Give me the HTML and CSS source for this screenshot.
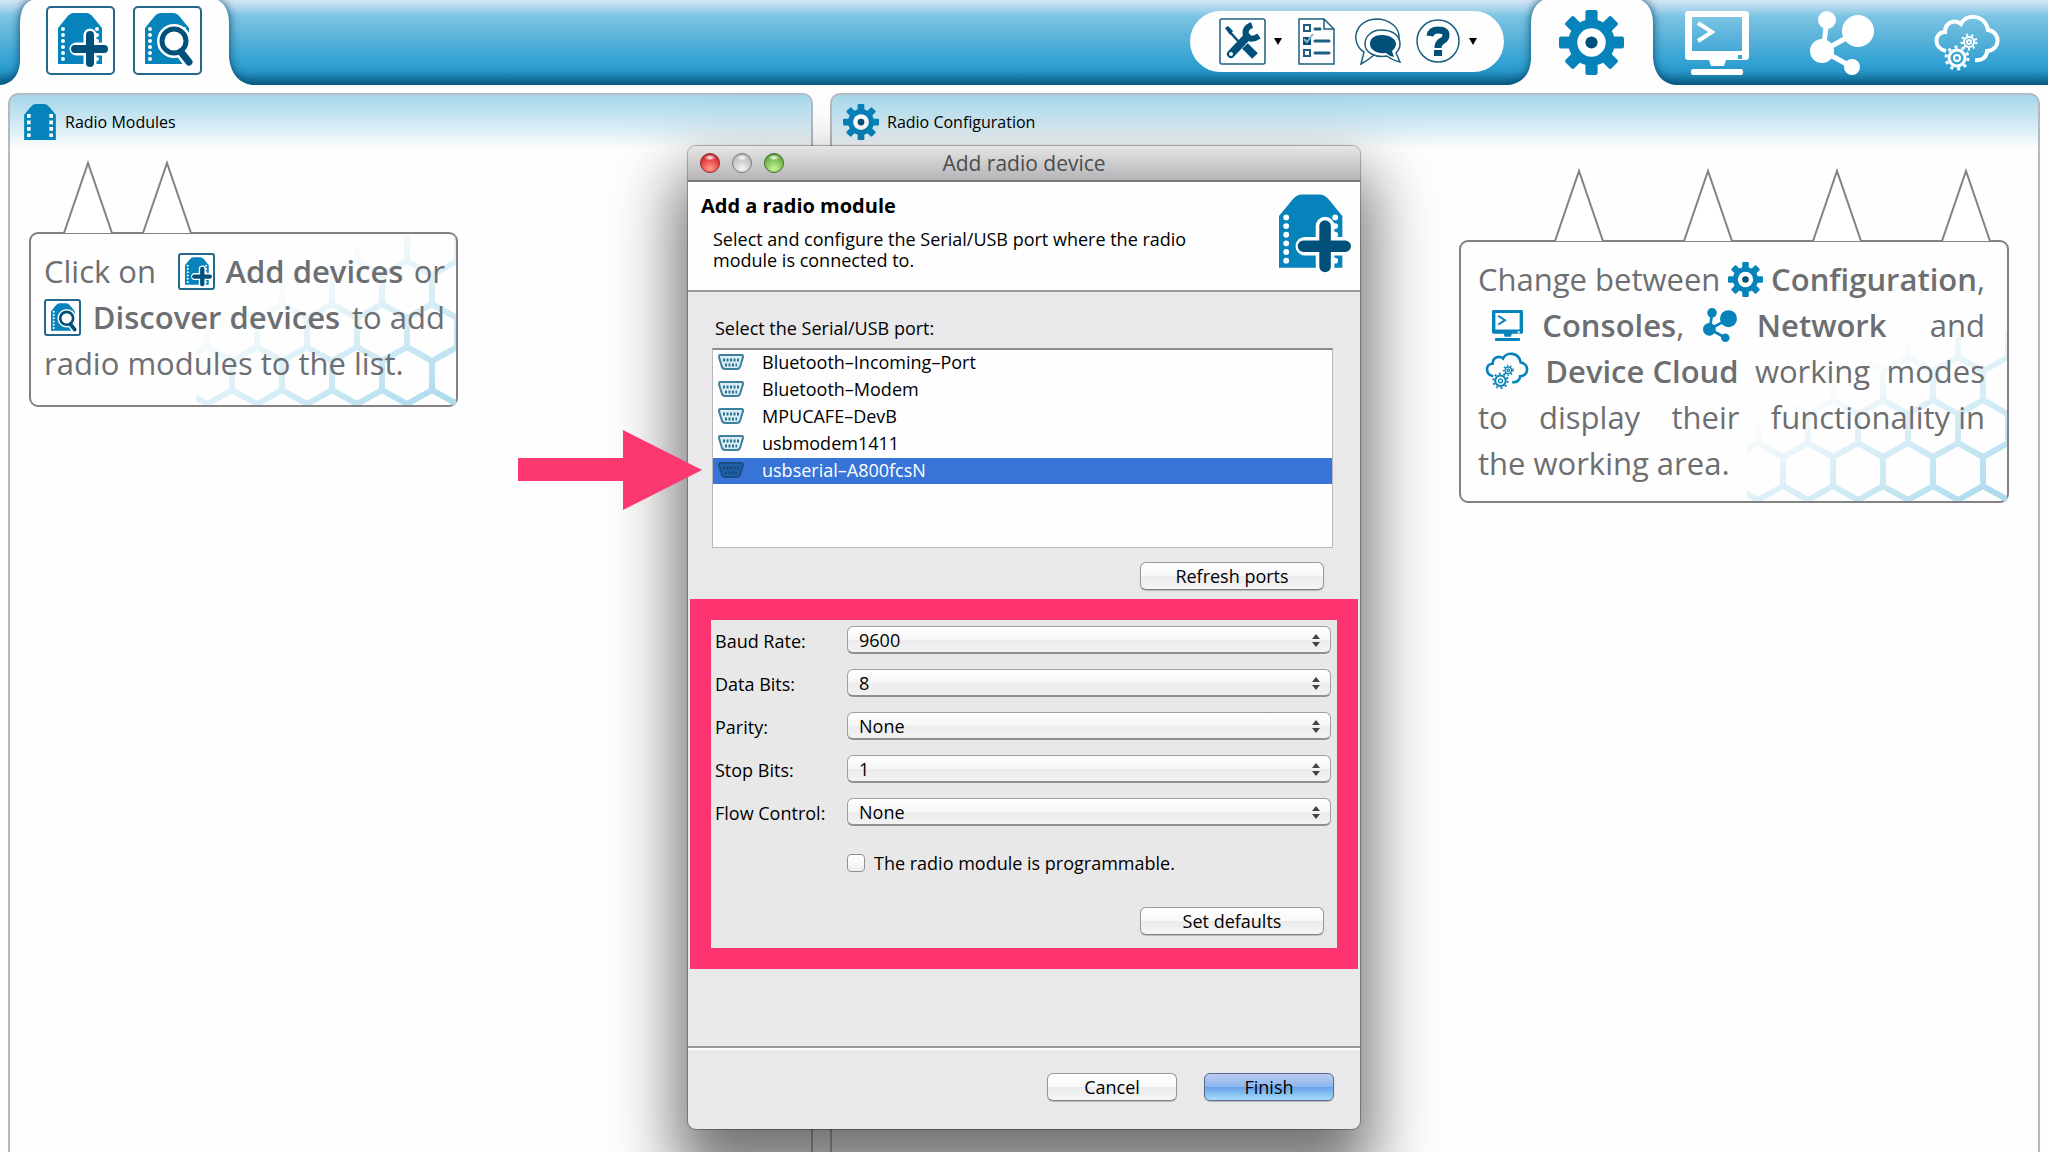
FILE: index.html
```html
<!DOCTYPE html>
<html lang="en">
<head>
  <meta charset="UTF-8" />
  <title>Add radio device</title>
  <link rel="stylesheet" href="styles.css">
</head>
<body>
  <!-- icon set -->
  <svg class="defs" width="0" height="0" aria-hidden="true">
    <defs>
      <symbol id="chip" viewBox="0 0 44 50">
        <path fill="#0683bb" d="M0 15 9 4q3-4 7-4h12q4 0 7 4l9 11v35H0z"/>
        <path stroke="#fff" stroke-width="5" stroke-dasharray="5 4" d="M6.500 14v32M37.500 14v32"/>
      </symbol>
      <symbol id="chip-add" viewBox="0 0 50 55">
        <path fill="#0683bb" d="M0 15 9 4q3-4 7-4h12q4 0 7 4l9 11v36H0z"/>
        <path stroke="#fff" stroke-width="4" stroke-linecap="round" stroke-dasharray="0 6" d="M5 16v31M39 16v31"/>
        <path stroke="#fff" stroke-width="13" stroke-linecap="round" d="M32 22v28M18 36h28"/>
        <path stroke="#00507a" stroke-width="8" stroke-linecap="round" d="M32 22v28M17 36h29"/>
      </symbol>
      <symbol id="chip-find" viewBox="0 0 50 55">
        <path fill="#0683bb" d="M0 15 9 4q3-4 7-4h12q4 0 7 4l9 11v36H0z"/>
        <path stroke="#fff" stroke-width="4" stroke-linecap="round" stroke-dasharray="0 6" d="M5 16v31M39 16v4"/>
        <path stroke="#fff" stroke-width="13" stroke-linecap="round" d="M37 39l7 10"/>
        <circle cx="29" cy="28" r="12" fill="#fff" stroke="#fff" stroke-width="10"/>
        <circle cx="29" cy="28" r="12" fill="none" stroke="#00507a" stroke-width="5"/>
        <path stroke="#00507a" stroke-width="7" stroke-linecap="round" d="M36 39l8 10"/>
      </symbol>
      <symbol id="gear" viewBox="0 0 64 64">
        <g fill="#0683bb">
          <circle cx="32" cy="32" r="23"/>
          <rect x="26" y="0" width="12" height="64" rx="2"/>
          <rect x="0" y="26" width="64" height="12" rx="2"/>
          <rect x="26" y="0" width="12" height="64" rx="2" transform="rotate(45 32 32)"/>
          <rect x="26" y="0" width="12" height="64" rx="2" transform="rotate(-45 32 32)"/>
        </g>
        <circle cx="32" cy="32" r="14" fill="#fff"/>
        <circle cx="32" cy="32" r="6" fill="#00507a"/>
      </symbol>
      <symbol id="console" viewBox="0 0 64 64">
        <path fill="currentColor" fill-rule="evenodd" d="M3 0h58q3 0 3 3v43q0 3-3 3H41l-2 6H26l-2-6H3q-3 0-3-3V3q0-3 3-3zM7 6v34h50V6zM53 44h4v4h-4z"/>
        <rect x="6" y="58" width="52" height="6" rx="2" fill="currentColor"/>
        <path fill="none" stroke="currentColor" stroke-width="4" d="M13 12l14 9-14 9"/>
      </symbol>
      <symbol id="network" viewBox="0 0 64 64">
        <path fill="none" stroke="currentColor" stroke-width="5" d="M17 9l-4 31 32-18M13 40l29 16"/>
        <g fill="currentColor">
          <circle cx="17" cy="9" r="9"/><circle cx="48" cy="20" r="16"/>
          <circle cx="12" cy="40" r="12"/><circle cx="42" cy="56" r="8"/>
        </g>
      </symbol>
      <symbol id="cloud" viewBox="0 0 66 58">
        <g fill="none" stroke="currentColor">
          <path stroke-width="4" d="M12 37C-1 34 0 18 11 18 11 8 21 5 27 10 32-1 51 0 54 16 67 18 67 36 53 37 53 43 48 47 41 46"/>
          <circle cx="23" cy="44" r="8" stroke-width="3"/>
          <circle cx="23" cy="44" r="11" stroke-width="3" stroke-dasharray="3 4"/>
          <circle cx="23" cy="44" r="3" stroke-width="2"/>
          <circle cx="35" cy="28" r="5" stroke-width="2"/>
          <circle cx="35" cy="28" r="7" stroke-width="3" stroke-dasharray="2 3"/>
          <circle cx="35" cy="28" r="2" stroke-width="2"/>
        </g>
      </symbol>
      <symbol id="serial" viewBox="0 0 26 16">
        <path fill="#d9eef5" stroke="#3f7f9c" stroke-width="2" d="M2 1h22q1 0 1 2l-3 10q-1 2-3 2H7q-2 0-3-2L1 3q0-2 1-2z"/>
        <path stroke="#2d6f8f" stroke-width="3" stroke-dasharray="2 1.500" d="M5 6h16M7 11h12"/>
      </symbol>
      <symbol id="serial-on" viewBox="0 0 26 16">
        <path fill="#1f62a8" stroke="#1d4f86" stroke-width="2" d="M2 1h22q1 0 1 2l-3 10q-1 2-3 2H7q-2 0-3-2L1 3q0-2 1-2z"/>
        <path stroke="#174678" stroke-width="3" stroke-dasharray="2 1.500" d="M5 6h16M7 11h12"/>
      </symbol>
      <symbol id="spike" viewBox="0 0 50 74">
        <path fill="#fff" stroke="#828285" stroke-width="2" d="M0 73h1L25 3l24 70h1"/>
      </symbol>
      <pattern id="hex" width="50" height="86" patternUnits="userSpaceOnUse" patternTransform="translate(236 126)">
        <path fill="none" stroke="#aedcee" stroke-width="6" d="M0 0v29l25 14v29L0 86M25 43l25-14V0M25 72l25 14M0 0l-25-14M50 0l25-14M0 0l25-14L50 0"/>
      </pattern>
      <linearGradient id="fade" x1="0.400" y1="0.200" x2="1" y2="0.900">
        <stop offset="0" stop-color="#000"/>
        <stop offset="1" stop-color="#fff"/>
      </linearGradient>
      <mask id="hex-mask"><rect width="260" height="170" fill="url(#fade)"/></mask>
      <symbol id="hexes" viewBox="0 0 260 170">
        <rect width="260" height="170" fill="url(#hex)" mask="url(#hex-mask)"/>
      </symbol>
    </defs>
  </svg>

  <header class="toolbar">
    <div class="device-tab">
      <svg class="tab-shape" width="252" height="85" viewBox="0 0 252 85">
        <path fill="#fefefe" d="M0 85C14 84 20 72 20 60V24Q20 4 32 0H218Q229 6 229 24V58Q232 82 252 85z"/>
      </svg>
      <button class="device-btn" aria-label="Add devices"><svg width="50" height="55"><use href="#chip-add"/></svg></button>
      <button class="device-btn" aria-label="Discover devices"><svg width="50" height="55"><use href="#chip-find"/></svg></button>
    </div>
    <div class="pill">
      <button class="tool-btn" aria-label="Tools">
        <svg width="47" height="47" viewBox="0 0 47 47">
          <rect x="1" y="1" width="45" height="45" rx="2" fill="#fff" stroke="#1d5f80" stroke-width="1.500"/>
          <g fill="#00507a" stroke="#00507a">
            <path stroke-width="2.500" d="M10 13l9 10"/>
            <path stroke="none" d="M6 10l3-2 5 5-3 4z"/>
            <path stroke-width="8" stroke-linecap="butt" d="M26 28l10 10"/>
            <path stroke-width="8" stroke-linecap="round" d="M12 36l16-17"/>
            <path fill="none" stroke-width="6" d="M33 7q-8 3-6 10 4 7 13 1"/>
          </g>
          <circle cx="12" cy="36" r="2" fill="#fff"/>
        </svg>
      </button>
      <span class="caret"></span>
      <button class="tool-btn list-btn" aria-label="Profiles">
        <svg width="37" height="47" viewBox="0 0 37 47">
          <g fill="none" stroke="#1d5f80" stroke-width="1.500">
            <path d="M1 1h25l10 10v35H1zM26 1v10h10"/>
            <path stroke-width="2" d="M6 7h6v6H6zM6 32h6v6H6z"/>
            <path stroke-width="3" stroke-linecap="round" d="M17 11h5M17 23h14M17 35h14"/>
          </g>
          <path fill="#00507a" d="M5 19h8v8H5z"/>
          <path fill="none" stroke="#8fb6c8" stroke-width="2" d="M6 21l3 3 6-8"/>
        </svg>
      </button>
      <button class="tool-btn chat-btn" aria-label="Feedback">
        <svg width="47" height="47" viewBox="0 0 47 47">
          <g fill="#fff" stroke="#1d5f80" stroke-width="1.500">
            <path d="M7 46l3-12C-4 25 0 2 22 1c13 0 24 8 23 20S30 36 20 37q-7 6-13 9z"/>
            <path d="M27 12c11 0 19 5 19 14 0 4-1 6-4 9l4 9q-8-2-13-6C20 40 11 34 11 26s7-14 16-14z"/>
          </g>
          <path fill="#00507a" d="M28 17c8 0 14 4 14 9 0 3-2 5-4 7l2 6q-5-1-8-4c-9 1-16-3-16-9s5-9 12-9z"/>
        </svg>
      </button>
      <button class="tool-btn help-btn" aria-label="Help">
        <svg width="45" height="45" viewBox="0 0 45 45">
          <circle cx="22" cy="22" r="21" fill="#fff" stroke="#1d5f80" stroke-width="1.500"/>
          <path fill="none" stroke="#00507a" stroke-width="7" d="M14 17q1-6 8-6 8 0 8 5 0 4-4 6t-4 7"/>
          <path fill="#00507a" d="M18 31h8v6h-8z"/>
        </svg>
      </button>
      <span class="caret"></span>
    </div>
    <nav class="modes">
      <button class="mode active" aria-label="Configuration">
        <svg class="tab-shape" width="166" height="85" viewBox="0 0 166 85">
          <path fill="#fefefe" d="M0 85Q20 82 22 60V24Q22 6 34 0H132Q144 6 144 24V58Q146 82 166 85z"/>
        </svg>
        <svg class="mode-icon" width="65" height="65"><use href="#gear"/></svg>
      </button>
      <button class="mode" aria-label="Consoles"><svg width="64" height="64"><use href="#console"/></svg></button>
      <button class="mode" aria-label="Network"><svg width="64" height="64"><use href="#network"/></svg></button>
      <button class="mode" aria-label="Device Cloud"><svg width="66" height="58"><use href="#cloud"/></svg></button>
    </nav>
  </header>

  <main class="workspace">
    <section class="panel">
      <h2 class="panel-title"><svg width="32" height="36"><use href="#chip"/></svg>Radio Modules</h2>
      <div class="hint hint-left">
        <div class="spikes">
          <svg width="50" height="74"><use href="#spike"/></svg>
          <svg width="50" height="74"><use href="#spike"/></svg>
        </div>
        <div class="bubble">
          <svg class="hexes" width="260" height="170"><use href="#hexes"/></svg>
          <div class="line">
            <span>Click on</span>
            <span class="boxed"><svg width="27" height="30"><use href="#chip-add"/></svg></span>
            <b>Add devices</b>
            <span>or</span>
          </div>
          <div class="line">
            <span class="boxed"><svg width="27" height="30"><use href="#chip-find"/></svg></span>
            <b>Discover devices</b>
            <span>to add</span>
          </div>
          <div class="line">radio modules to the list.</div>
        </div>
      </div>
    </section>

    <section class="panel">
      <h2 class="panel-title config-title"><svg width="36" height="36"><use href="#gear"/></svg>Radio Configuration</h2>
      <div class="hint hint-right">
        <div class="spikes">
          <svg width="50" height="74"><use href="#spike"/></svg>
          <svg width="50" height="74"><use href="#spike"/></svg>
          <svg width="50" height="74"><use href="#spike"/></svg>
          <svg width="50" height="74"><use href="#spike"/></svg>
        </div>
        <div class="bubble">
          <svg class="hexes" width="260" height="170"><use href="#hexes"/></svg>
          <div class="line">
            <span>Change between</span>
            <svg width="35" height="35"><use href="#gear"/></svg>
            <span><b>Configuration</b>,</span>
          </div>
          <div class="line indent">
            <svg width="31" height="31"><use href="#console"/></svg>
            <span><b>Consoles</b>,</span>
            <svg width="34" height="34"><use href="#network"/></svg>
            <b>Network</b>
            <span class="far">and</span>
          </div>
          <div class="line">
            <svg class="cloud" width="44" height="38"><use href="#cloud"/></svg>
            <b>Device Cloud</b>
            <span>working</span>
            <span>modes</span>
          </div>
          <div class="line">
            <span>to</span>
            <span>display</span>
            <span>their</span>
            <span>functionality in</span>
          </div>
          <div class="line">the working area.</div>
        </div>
      </div>
    </section>
  </main>

  <div class="overlay">
    <form class="dialog" role="dialog" aria-labelledby="dialog-title">
      <div class="titlebar">
        <div class="lights">
          <span class="light red"></span>
          <span class="light gray"></span>
          <span class="light green"></span>
        </div>
        <span id="dialog-title">Add radio device</span>
      </div>
      <div class="intro">
        <div>
          <h1>Add a radio module</h1>
          <p>Select and configure the Serial/USB port where the radio module is connected to.</p>
        </div>
        <svg width="72" height="80"><use href="#chip-add"/></svg>
      </div>
      <div class="ports">
        <div class="ports-label" id="ports-label">Select the Serial/USB port:</div>
        <ul class="port-list" role="listbox" aria-labelledby="ports-label">
          <li role="option"><svg width="26" height="16"><use href="#serial"/></svg>Bluetooth–Incoming–Port</li>
          <li role="option"><svg width="26" height="16"><use href="#serial"/></svg>Bluetooth–Modem</li>
          <li role="option"><svg width="26" height="16"><use href="#serial"/></svg>MPUCAFE–DevB</li>
          <li role="option"><svg width="26" height="16"><use href="#serial"/></svg>usbmodem1411</li>
          <li role="option" class="selected" aria-selected="true"><svg width="26" height="16"><use href="#serial-on"/></svg>usbserial–A800fcsN</li>
        </ul>
        <button type="button" class="btn wide">Refresh ports</button>
      </div>
      <div class="settings">
        <div class="field">
          <label for="baud">Baud Rate:</label>
          <div class="popup"><select id="baud"><option>9600</option><option>115200</option></select></div>
        </div>
        <div class="field">
          <label for="bits">Data Bits:</label>
          <div class="popup"><select id="bits"><option>8</option><option>7</option></select></div>
        </div>
        <div class="field">
          <label for="parity">Parity:</label>
          <div class="popup"><select id="parity"><option>None</option><option>Even</option></select></div>
        </div>
        <div class="field">
          <label for="stop">Stop Bits:</label>
          <div class="popup"><select id="stop"><option>1</option><option>2</option></select></div>
        </div>
        <div class="field">
          <label for="flow">Flow Control:</label>
          <div class="popup"><select id="flow"><option>None</option><option>Hardware</option></select></div>
        </div>
        <div class="check">
          <input type="checkbox" id="programmable">
          <label for="programmable">The radio module is programmable.</label>
        </div>
        <button type="button" class="btn wide">Set defaults</button>
      </div>
      <div class="actions">
        <button type="button" class="btn">Cancel</button>
        <button type="submit" class="btn primary">Finish</button>
      </div>
      <svg class="pointer" width="184" height="80" viewBox="0 0 184 80">
        <path fill="#fc3871" d="M0 28h105V0l79 40-79 40V51H0z"/>
      </svg>
    </form>
  </div>
</body>
</html>
```

FILE: styles.css
```css
* {
  box-sizing: border-box;
}
body {
  margin: 0;
  height: 100vh;
  overflow: hidden;
  display: flex;
  flex-direction: column;
  background: #fefefe;
  color: #000;
  font-family: "Lucida Grande", "Open Sans", sans-serif;
  font-size: 18px;
  font-weight: 500;
  line-height: 24px;
}
button, select {
  font: inherit;
  color: inherit;
}
svg {
  display: block;
  flex: none;
}
.defs {
  position: absolute;
}

/* top toolbar */
.toolbar {
  flex: none;
  display: flex;
  height: 85px;
  padding-right: 19px;
  overflow: hidden;
  background: linear-gradient(#d4e5f5 0, #add6ec 8px, #7cc4e3 16px, #56b1d9 40px, #2d9fd1 66px, #2793c4 72px, #04577e 85px);
}
.device-tab {
  position: relative;
  display: flex;
  gap: 18px;
  padding: 6px 0 0 46px;
}
.tab-shape {
  position: absolute;
  left: 0;
  top: 0;
  filter: drop-shadow(0 0 5px #04486b);
}
.device-btn {
  position: relative;
  width: 69px;
  height: 69px;
  padding: 0 0 0 10px;
  border: 2px solid #25678a;
  border-radius: 5px;
  background: #fff;
}
.pill {
  display: flex;
  align-items: center;
  height: 61px;
  width: 314px;
  margin: 11px 25px 0 auto;
  padding-left: 29px;
  border-radius: 31px;
  background: #fefefe;
}
.tool-btn {
  padding: 0;
  border: 0;
  background: none;
}
.caret {
  margin-left: 8px;
  border: 4px solid transparent;
  border-top: 7px solid #000;
  border-bottom: 0;
}
.list-btn {
  margin-left: 16px;
}
.chat-btn {
  margin-left: 19px;
}
.help-btn {
  margin-left: 15px;
}
.modes {
  display: flex;
}
.mode {
  position: relative;
  display: flex;
  justify-content: center;
  align-items: center;
  width: 125px;
  padding: 0;
  border: 0;
  background: none;
  color: #fff;
}
.mode .tab-shape {
  left: -20px;
}
.mode-icon {
  position: relative;
}

/* panels */
.workspace {
  flex: 1;
  display: grid;
  grid-template-columns: 805fr 1210fr;
  gap: 17px;
  padding: 8px 8px 0;
}
.panel {
  border: 2px solid #b4b9c3;
  border-bottom: 0;
  border-radius: 10px 10px 0 0;
  background: linear-gradient(#a5d7e8, #c9e6f2 24px, #fefefe 54px);
}
.panel-title {
  display: flex;
  align-items: center;
  gap: 9px;
  height: 53px;
  margin: 0;
  padding-left: 14px;
  font-size: 16px;
  font-weight: 500;
}
.config-title {
  gap: 8px;
  padding-left: 11px;
}
.hint {
  color: #6d6e72;
  font-family: "Trebuchet MS", "Open Sans", sans-serif;
  font-size: 31px;
  font-weight: 400;
  line-height: 46px;
}
.hint b {
  font-weight: 600;
}
.hint-left {
  width: 429px;
  margin: 12px 0 0 19px;
}
.hint-right {
  width: 550px;
  margin: 20px 29px 0 auto;
}
.spikes {
  position: relative;
  z-index: 1;
  display: flex;
  gap: 29px;
  padding-left: 34px;
  margin-bottom: -2px;
}
.hint-right .spikes {
  gap: 79px;
  padding-left: 95px;
}
.bubble {
  position: relative;
  padding: 14px 11px 19px 13px;
  border: 2px solid #828285;
  border-radius: 9px;
  background: #fefefe;
}
.hint-right .bubble {
  padding: 14px 22px 15px 17px;
}
.hexes {
  position: absolute;
  right: 0;
  bottom: 0;
}
.line {
  position: relative;
  display: flex;
  align-items: center;
  justify-content: space-between;
}
.line.indent {
  padding-left: 14px;
}
.line svg {
  color: #0683bb;
}
.cloud {
  margin-left: 7px;
}
.far {
  margin-left: 24px;
}
.boxed {
  width: 37px;
  height: 37px;
  padding: 2px 0 0 5px;
  border: 2px solid #25678a;
  border-radius: 3px;
  background: #fff;
}
.line span:first-child + .boxed {
  margin-left: 12px;
}

/* dialog */
.overlay {
  position: absolute;
  inset: 0;
  display: flex;
  justify-content: center;
  align-items: flex-start;
  padding-top: 146px;
  overflow: hidden;
}
.dialog {
  position: relative;
  width: 672px;
  border-radius: 8px;
  background: #e9e8ea;
  box-shadow: 0 0 1px 1px rgba(0, 0, 0, 0.3), 0 38px 64px 12px rgba(0, 0, 0, 0.55);
}
.titlebar {
  display: flex;
  align-items: center;
  justify-content: center;
  height: 36px;
  border-bottom: 2px solid #7b797c;
  border-radius: 8px 8px 0 0;
  background: linear-gradient(#e6e6e6, #b5b3b6);
  color: #4c4c4e;
  font-size: 21px;
}
.lights {
  position: absolute;
  left: 12px;
  display: flex;
  gap: 12px;
}
.light {
  width: 20px;
  height: 20px;
  border: 1px solid #777;
  border-radius: 50%;
  background: radial-gradient(ellipse 6px 3px at 50% 20%, #fff, transparent), radial-gradient(circle at 50% 80%, #f4f4f6, #b5b5b8 80%);
}
.light.red {
  border-color: #8c2a2a;
  background: radial-gradient(ellipse 6px 3px at 50% 20%, #fff, transparent), radial-gradient(circle at 50% 80%, #ff9a90, #e33b3b 60%, #a52020);
}
.light.green {
  border-color: #3d6b28;
  background: radial-gradient(ellipse 6px 3px at 50% 20%, #fff, transparent), radial-gradient(circle at 50% 80%, #c8f59a, #74bb4c 60%, #3f7d25);
}
.intro {
  display: flex;
  justify-content: space-between;
  height: 110px;
  padding: 12px 9px 0 13px;
  border-bottom: 2px solid #9b9b9d;
  background: #fefefe;
}
.intro h1 {
  margin: 0 0 11px;
  font-size: 20px;
  line-height: 24px;
}
.intro p {
  width: 500px;
  margin: 0 0 0 12px;
  line-height: 21px;
}
.ports {
  display: flex;
  flex-direction: column;
  padding: 24px 27px 9px 24px;
}
.ports-label {
  padding-left: 3px;
}
.port-list {
  height: 200px;
  margin: 8px 0 14px;
  padding: 0;
  border: 1px solid #b9b9bb;
  border-top: 2px solid #8e8e90;
  background: #fefefe;
  list-style: none;
}
.port-list li {
  display: flex;
  align-items: center;
  gap: 18px;
  height: 27px;
  padding: 0 0 3px 5px;
}
.port-list .selected {
  height: 26px;
  padding-bottom: 2px;
  background: #3874d7;
  color: #fff;
}
.btn {
  width: 130px;
  height: 28px;
  padding: 0;
  border: 1px solid #98989a;
  border-bottom-color: #808082;
  border-radius: 6px;
  background: linear-gradient(#fff, #f8f8f9 50%, #ebebed 52%, #f6f6f7);
  box-shadow: 0 1px 1px rgba(0, 0, 0, 0.2);
  line-height: 24px;
}
.btn.wide {
  align-self: flex-end;
  width: 184px;
  margin-right: 9px;
}
.btn.primary {
  border-color: #5c6a8e;
  background: linear-gradient(#bccbf2, #8db6ee 48%, #6aa4ea 52%, #a5dcfa);
}
.settings {
  display: flex;
  flex-direction: column;
  gap: 15px;
  margin: 0 2px 77px;
  padding: 6px 6px 13px 4px;
  border: 21px solid #fe3470;
  background: #e9e8e9;
}
.field {
  display: flex;
  align-items: center;
  height: 28px;
}
.field label {
  width: 132px;
  padding-top: 2px;
}
.popup {
  position: relative;
  flex: 1;
}
.popup::before, .popup::after {
  content: "";
  position: absolute;
  right: 11px;
  top: 8px;
  border: 4px solid transparent;
  border-top: 0;
  border-bottom: 5px solid #444;
  pointer-events: none;
}
.popup::after {
  top: 16px;
  border-top: 5px solid #444;
  border-bottom: 0;
}
.popup select {
  display: block;
  appearance: none;
  width: 100%;
  height: 28px;
  padding: 0 11px;
  border: 1px solid #a0a0a2;
  border-bottom: 2px solid #8f8f91;
  border-radius: 6px;
  background: linear-gradient(#fff, #f6f6f7 50%, #ececee 52%, #f2f2f3);
}
.check {
  display: flex;
  align-items: center;
  gap: 9px;
  margin: 10px 0 17px;
  padding-left: 132px;
}
.check input {
  appearance: none;
  width: 18px;
  height: 18px;
  margin: 0;
  border: 1px solid #929294;
  border-radius: 4px;
  background: linear-gradient(#fff, #f0f0f1);
}
.settings .btn {
  margin-right: 7px;
}
.actions {
  display: flex;
  justify-content: flex-end;
  gap: 27px;
  padding: 25px 26px 28px;
  border-top: 2px solid #979799;
  box-shadow: inset 0 2px #fff;
}
.pointer {
  position: absolute;
  left: -170px;
  top: 284px;
}
```
